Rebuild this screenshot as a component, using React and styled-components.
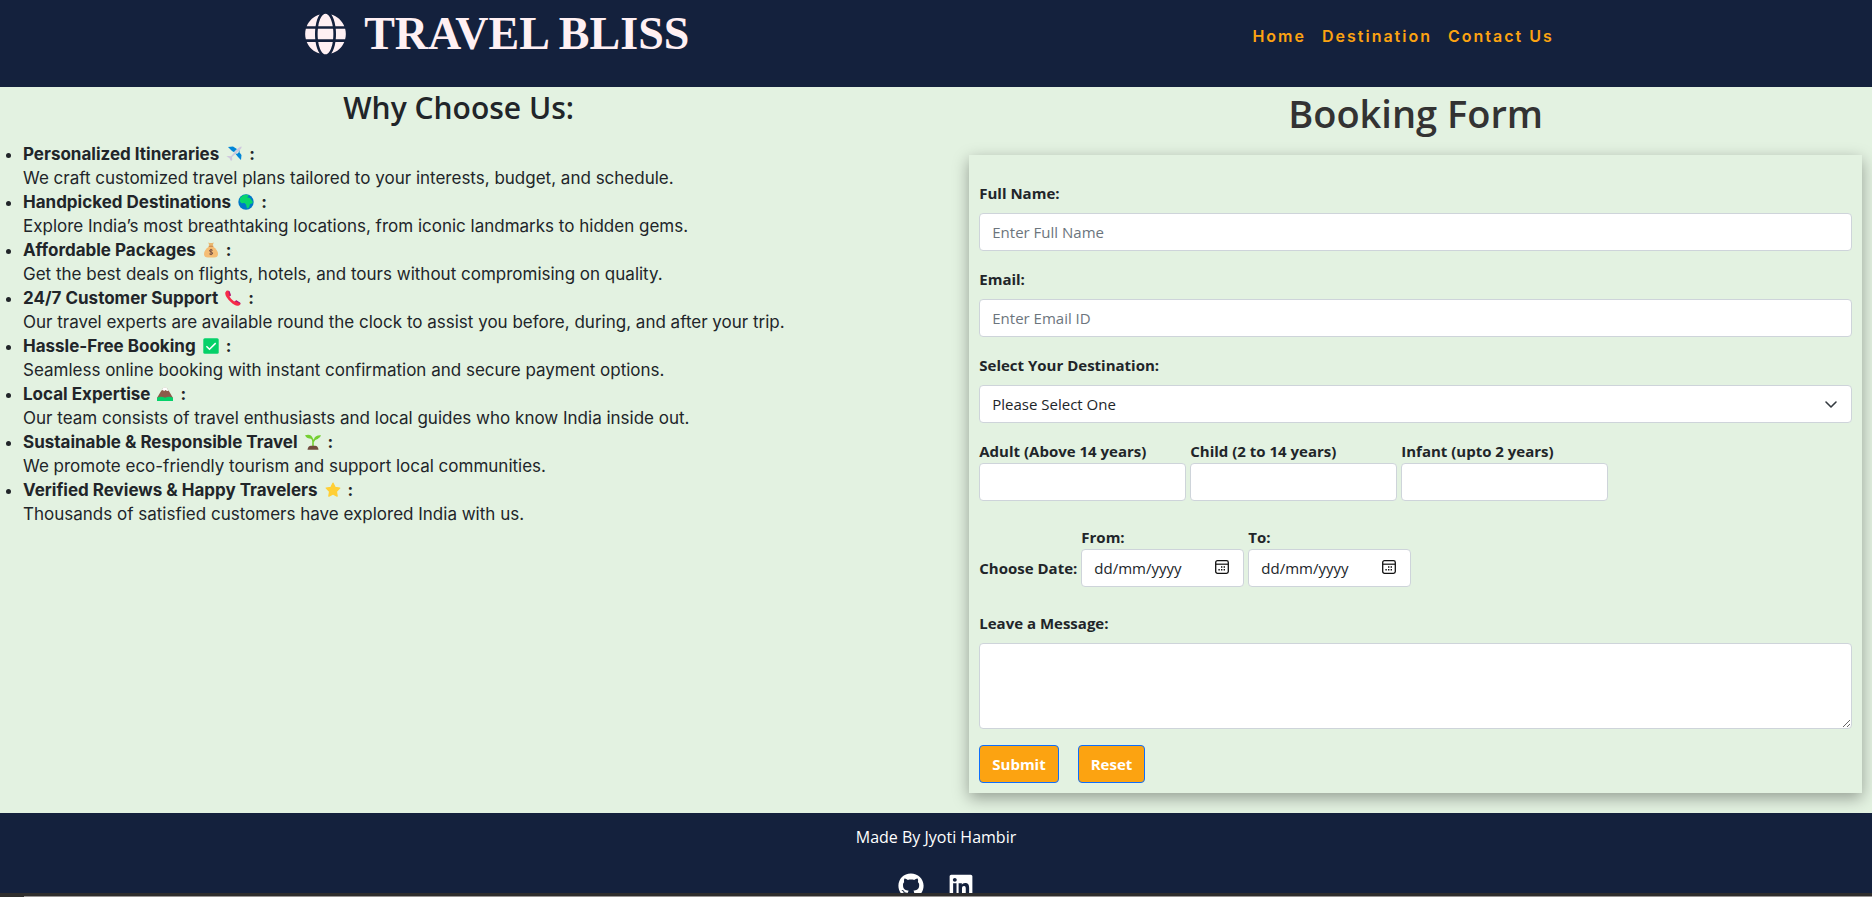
import React from "react";
import styled, { createGlobalStyle } from "styled-components";
import { FaGithub, FaGlobe, FaLinkedin } from "react-icons/fa";

const GlobalStyle = createGlobalStyle`
  *, *::before, *::after { box-sizing: border-box; }
  html { scrollbar-width: none; }
  body {
    margin: 0;
    background: #e3f2e1;
    color: #212529;
    font: 400 16px/24px "Open Sans", "Noto Sans", sans-serif;
  }
  h1, h2, p, ul { margin: 0; padding: 0; }
`;

const Header = styled.header`
  display: flex;
  justify-content: space-between;
  align-items: flex-start;
  height: 87px;
  padding: 0 17% 0 16.3%;
  background: #14213d;
`;

const Brand = styled.h1`
  display: flex;
  align-items: center;
  gap: 18px;
  padding-top: 6px;
  color: #fff0f3;
  font: 700 46px/56px "Liberation Serif", serif;

  svg { height: 42px; width: 41px; }
`;

const Nav = styled.nav`
  display: flex;
  gap: 16px;
  padding-top: 24px;
`;

const NavLink = styled.a`
  color: #fca311;
  font: 600 16px/24px Inter, sans-serif;
  letter-spacing: 2px;
  text-decoration: none;
`;

const Main = styled.main`
  display: grid;
  grid-template-columns: 49% 1fr;
  column-gap: 42px;
  padding-bottom: 20px;
`;

const Title = styled.h2`
  color: ${(p) => (p.$large ? "#333" : "inherit")};
  font-weight: 600;
  font-size: ${(p) => (p.$large ? 38 : 30)}px;
  line-height: ${(p) => (p.$large ? 52 : 42)}px;
  text-align: center;
`;

const Reasons = styled.ul`
  padding: 13px 0 0 23px;
  font-family: Inter, sans-serif;
  font-size: 17px;
`;

const Reason = styled.li`
  strong {
    display: flex;
    align-items: center;
    gap: 7px;
    font-weight: 700;
  }
`;

const Emoji = styled.svg`
  width: 16px;
  height: 16px;
`;

const Card = styled.form`
  display: flex;
  flex-direction: column;
  gap: 16px;
  margin: 16px 10px 0;
  padding: 26px 10px 10px;
  box-shadow: rgba(0, 0, 0, 0.35) 0 5px 15px;
`;

const Field = styled.div`
  display: flex;
  flex-direction: column;
  gap: ${(p) => (p.$tight ? 0 : 8)}px;
  width: ${(p) => p.$width || "auto"};
`;

const FieldRow = styled.div`
  display: flex;
  align-items: flex-end;
  gap: 4px;
  padding-bottom: 8px;
`;

const Label = styled.label`
  font-size: 15px;
  font-weight: 700;
`;

const DateCaption = styled.span`
  font-size: 15px;
  font-weight: 700;
  line-height: 38px;
`;

const Input = styled.input`
  width: 100%;
  height: 38px;
  padding: 6px 12px;
  border: 1px solid #ced4da;
  border-radius: 4px;
  background: #fff;
  color: #212529;
  font: inherit;
  font-size: 15px;

  &::placeholder {
    color: ${(p) => (p.$dark ? "#212529" : "#6c757d")};
    opacity: 1;
  }
`;

const Select = styled(Input)`
  appearance: none;
`;

const TextArea = styled(Input)`
  display: block;
  height: 86px;
  resize: vertical;
`;

const Adorned = styled.div`
  position: relative;

  svg {
    position: absolute;
    top: 11px;
    right: ${(p) => p.$inset}px;
    pointer-events: none;
  }
`;

const Actions = styled.div`
  display: flex;
  gap: 19px;
`;

const Button = styled.button`
  height: 38px;
  padding: 0 12px;
  border: 1px solid #0d6efd;
  border-radius: 4px;
  background: #fca311;
  color: #fff;
  font: inherit;
  font-weight: 700;
  font-size: 15px;
`;

const Footer = styled.footer`
  display: flex;
  flex-direction: column;
  align-items: center;
  gap: 24px;
  padding: 12px 0;
  background: #14213d;
  color: #fff;
`;

const Socials = styled.div`
  display: flex;
  gap: 24px;
  height: 26px;

  a { color: inherit; line-height: 0; }
  svg { width: auto; height: 26px; }
`;

const BottomEdge = styled.div`
  position: fixed;
  inset: auto 0 0 0;
  height: 4px;
  padding-left: 24px;
  background: #2e2d2d;

  &::after {
    content: "";
    display: block;
    height: 1px;
    transform: translateY(3px);
    background: #989595;
  }
`;

const drawings = {
  plane: (
    <>
      <path d="M2 1l5-.5L14 5l-3 3-5-3zM15 14l.5-5L11 3l-3 3 4 5z" fill="#0086d8" />
      <path d="M2.400 10l2.600.3 7-8Q14.400.2 15.600.4q.4 1.200-1.600 3.400l-8 7.200.3 2.700-1.300 1.300-1.600-3-3-1.600z" fill="#cfc8dd" />
    </>
  ),
  globe: (
    <>
      <circle cx="8" cy="8" r="7.700" fill="#0078c8" />
      <path d="M2 4l3-2.700 4-.8 2 1.200-2 1.500 3 .8 3 4-1 1.500-2 .5-1 3.500-2 1-1-4-1.500-1.500-3 .2-1.800-2z" fill="#08d56c" />
    </>
  ),
  money: (
    <>
      <path d="M5.300.6q2.700 1 5.400 0L9.600 4h-3.200z" fill="#e9b870" />
      <path d="M6 4.500h4q5 3.500 5 7.500 0 3.600-4 3.600H5q-4 0-4-3.600 0-4 5-7.500z" fill="#f5bd74" />
      <path d="M5.700 4.300h4.600" stroke="#d08b4c" strokeWidth="1.200" />
      <path d="M9.700 8.300q-1.500-1-2.900-.2-1 1.200 1.200 1.800 2.400.7 1.500 2-1.500 1-3.200 0M8 6.900v6.200" fill="none" stroke="#765044" strokeWidth="1" />
    </>
  ),
  phone: (
    <>
      <path d="M1.500.7q2-1 3.200 1.600L5.500 5l-1 1.600q1.500 2.900 4.700 5l2-1 3.800 2.400q1.300 1.500-1 2.500-3.500 1.200-8-3.200Q-.5 6.500.3 2.400z" fill="#f72c48" />
      <path d="M3.300.5l1.500.9 1.200 4-1.300 1.100zM9.300 11.700l2.100-1.500 3.900 2.500.2 1.400-4.600-2.700z" fill="#b0167a" />
    </>
  ),
  check: (
    <>
      <rect x=".3" y=".3" width="15.400" height="15.400" rx="1.500" fill="#05d169" />
      <path d="M3.400 8.200l3.100 3.100 6.200-6.200" fill="none" stroke="#fff" strokeWidth="1.500" />
    </>
  ),
  mountain: (
    <>
      <path d="M0 12l3.500-6L6 2.500q2-2 4 0L12.500 6 16 12z" fill="#8c5a4a" />
      <path d="M4.500 4.500L6 2.200q2-1.700 4 0l1.600 2.500-1.600.3-1.500-1-1.500 1.200-1-1.100z" fill="#fff" />
      <path d="M0 11.700q4-1.800 8 0 4-1.800 8 0V15H0z" fill="#05d169" />
    </>
  ),
  sprout: (
    <>
      <path d="M8 12V7.500Q8 3.500 3.500 3M8 8q1-3 5-4" fill="none" stroke="#75cf32" strokeWidth="1.600" />
      <path d="M0 1.200Q6-.6 7.500 3.800 2.500 6 0 1.200zM16 1.300q-5.500-.5-7 3.500Q14 6 16 1.300z" fill="#75cf32" />
      <path d="M2.500 15.700q.5-4 3.500-4h4q3 0 3.500 4z" fill="#724a3e" />
    </>
  ),
  star: (
    <path
      d="M8 1.200l2 4.200 4.700.7-3.400 3.300.8 4.700L8 11.900l-4.100 2.200.8-4.700L1.300 6.100 6 5.400z"
      fill="#ffcf35"
      stroke="#ffcf35"
      strokeWidth="1.400"
      strokeLinejoin="round"
    />
  ),
};

const reasons = [
  ["Personalized Itineraries", "plane", "We craft customized travel plans tailored to your interests, budget, and schedule."],
  ["Handpicked Destinations", "globe", "Explore India’s most breathtaking locations, from iconic landmarks to hidden gems."],
  ["Affordable Packages", "money", "Get the best deals on flights, hotels, and tours without compromising on quality."],
  ["24/7 Customer Support", "phone", "Our travel experts are available round the clock to assist you before, during, and after your trip."],
  ["Hassle-Free Booking", "check", "Seamless online booking with instant confirmation and secure payment options."],
  ["Local Expertise", "mountain", "Our team consists of travel enthusiasts and local guides who know India inside out."],
  ["Sustainable & Responsible Travel", "sprout", "We promote eco-friendly tourism and support local communities."],
  ["Verified Reviews & Happy Travelers", "star", "Thousands of satisfied customers have explored India with us."],
];

const travellers = [
  ["adult", "Adult (Above 14 years)"],
  ["child", "Child (2 to 14 years)"],
  ["infant", "Infant (upto 2 years)"],
];

const CalendarIcon = () => (
  <svg width="14" height="14" viewBox="0 0 14 14" fill="none" stroke="#111" aria-hidden="true">
    <rect x=".7" y=".7" width="12.600" height="12.600" rx="1.800" strokeWidth="1.300" />
    <path d="M1 4.200h12" strokeWidth="1.200" />
    <path d="M6 7h1.400M8.600 7H10M3.400 9.800h1.400M6 9.800h1.400M8.600 9.800H10" strokeWidth="1.400" />
  </svg>
);

function DateField({ id, label }) {
  return (
    <Field $tight $width="163px">
      <Label htmlFor={id}>{label}</Label>
      <Adorned $inset={15}>
        <Input $dark id={id} type="text" placeholder="dd/mm/yyyy" />
        <CalendarIcon />
      </Adorned>
    </Field>
  );
}

export default function App() {
  return (
    <>
      <GlobalStyle />
      <Header>
        <Brand>
          <FaGlobe aria-hidden="true" />
          TRAVEL BLISS
        </Brand>
        <Nav>
          <NavLink href="#home">Home</NavLink>
          <NavLink href="#destination">Destination</NavLink>
          <NavLink href="#contact">Contact Us</NavLink>
        </Nav>
      </Header>
      <Main>
        <section>
          <Title>Why Choose Us:</Title>
          <Reasons>
            {reasons.map(([title, icon, text]) => (
              <Reason key={title}>
                <strong>
                  {title}
                  <Emoji viewBox="0 0 16 16" aria-hidden="true">{drawings[icon]}</Emoji>
                  <span>:</span>
                </strong>
                <p>{text}</p>
              </Reason>
            ))}
          </Reasons>
        </section>
        <section>
          <Title $large>Booking Form</Title>
          <Card onSubmit={(e) => e.preventDefault()}>
            <Field>
              <Label htmlFor="name">Full Name:</Label>
              <Input id="name" type="text" placeholder="Enter Full Name" />
            </Field>
            <Field>
              <Label htmlFor="email">Email:</Label>
              <Input id="email" type="email" placeholder="Enter Email ID" />
            </Field>
            <Field>
              <Label htmlFor="place">Select Your Destination:</Label>
              <Adorned $inset={13}>
                <Select as="select" id="place" defaultValue="">
                  <option value="">Please Select One</option>
                </Select>
                <svg width="16" height="16" viewBox="0 0 16 16" fill="none" stroke="#343a40" strokeWidth="1.600" strokeLinecap="round" strokeLinejoin="round" aria-hidden="true">
                  <path d="M3 6l5 5 5-5" />
                </svg>
              </Adorned>
            </Field>
            <FieldRow>
              {travellers.map(([id, label]) => (
                <Field key={id} $tight $width="207px">
                  <Label htmlFor={id}>{label}</Label>
                  <Input id={id} type="number" />
                </Field>
              ))}
            </FieldRow>
            <FieldRow>
              <DateCaption>Choose Date:</DateCaption>
              <DateField id="from" label="From:" />
              <DateField id="to" label="To:" />
            </FieldRow>
            <Field>
              <Label htmlFor="message">Leave a Message:</Label>
              <TextArea as="textarea" id="message" />
            </Field>
            <Actions>
              <Button type="submit">Submit</Button>
              <Button type="reset">Reset</Button>
            </Actions>
          </Card>
        </section>
      </Main>
      <Footer>
        <p>Made By Jyoti Hambir</p>
        <Socials>
          <a href="#github" aria-label="GitHub"><FaGithub /></a>
          <a href="#linkedin" aria-label="LinkedIn"><FaLinkedin /></a>
        </Socials>
      </Footer>
      <BottomEdge />
    </>
  );
}
